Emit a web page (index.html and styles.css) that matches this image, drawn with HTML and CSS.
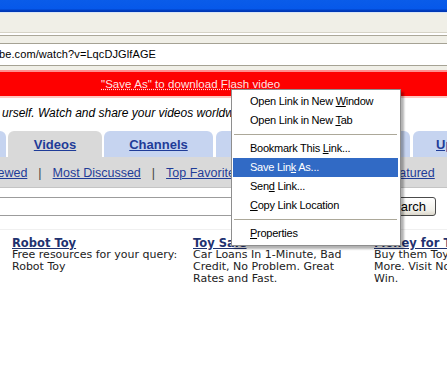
FILE: index.html
```html
<!DOCTYPE html>
<html lang="en">
<head>
    <meta charset="UTF-8">
    <title>YouTube - Broadcast Yourself.</title>
    <link rel="stylesheet" href="styles.css">
</head>
<body>
    <div class="titlebar"></div>
    <div class="toolbar"></div>
    <div class="addressbar">
        <div class="address-field">be.com/watch?v=LqcDJGlfAGE</div>
    </div>

    <div class="page">
        <div class="flash-bar">
            <a href="#" class="flash-link">"Save As" to download Flash video</a>
        </div>

        <p class="tagline">urself. Watch and share your videos worldwide!</p>

        <div class="tabs">
            <a href="#" class="tab tab-home">Home</a>
            <a href="#" class="tab tab-videos active">Videos</a>
            <a href="#" class="tab tab-channels">Channels</a>
            <a href="#" class="tab tab-community">Community</a>
            <a href="#" class="tab tab-upload">Upload</a>
        </div>

        <div class="subnav">
            <a href="#">Most Viewed</a><span class="sep">|</span>
            <a href="#">Most Discussed</a><span class="sep">|</span>
            <a href="#">Top Favorites</a><span class="sep">|</span>
            <a href="#">Most Subscribed</a><span class="sep">|</span>
            <a href="#">Featured</a>
        </div>

        <div class="search-row">
            <input type="text" class="search-input">
            <button class="search-btn">Search</button>
        </div>

        <div class="ads">
            <div class="ad">
                <a href="#" class="ad-title">Robot Toy</a>
                <p class="ad-text">Free resources for your query: Robot Toy</p>
            </div>
            <div class="ad">
                <a href="#" class="ad-title">Toy Sale</a>
                <p class="ad-text">Car Loans In 1-Minute, Bad Credit, No Problem. Great Rates and Fast.</p>
            </div>
            <div class="ad">
                <a href="#" class="ad-title">Money for Toys</a>
                <p class="ad-text">Buy them Toys, Games and More. Visit Now and Enter to Win.</p>
            </div>
        </div>
    </div>

    <!-- right-click menu over the page -->
    <ul class="context-menu">
        <li>Open Link in New <u>W</u>indow</li>
        <li>Open Link in New <u>T</u>ab</li>
        <li class="separator"></li>
        <li>Bookmark This <u>L</u>ink...</li>
        <li class="selected">Save Lin<u>k</u> As...</li>
        <li>Sen<u>d</u> Link...</li>
        <li><u>C</u>opy Link Location</li>
        <li class="separator"></li>
        <li><u>P</u>roperties</li>
    </ul>
</body>
</html>
```

FILE: styles.css
```css
:root {
    --chrome-bg: #f0efe7;
    --chrome-line: #aca899;
    --tab-blue: #c6d4f0;
    --tab-grey: #d9d9d9;
    --link-blue: #1f3c98;
    --ad-navy: #1f3270;
    --menu-select: #316ac5;
}

* {
    box-sizing: border-box;
    margin: 0;
    padding: 0;
}

body {
    width: 447px;
    height: 367px;
    overflow: hidden;
    background: #fff;
    font-family: 'Liberation Sans', Arial, sans-serif;
    position: relative;
}

a {
    color: var(--link-blue);
}

/* browser chrome */
.titlebar {
    height: 13px;
    background: linear-gradient(#0a5ce9 0, #0658ea 9px, #003fc4 10px, #0036b0 12px, #d8e4f6 12px);
}

.toolbar {
    height: 23px;
    background: var(--chrome-bg);
    border-bottom: 1px solid var(--chrome-line);
    box-shadow: inset 0 -2px 0 #fff, inset 0 -3px 0 #d6d3c6;
}

.addressbar {
    background: var(--chrome-bg);
    padding: 7px 0 4px;
}

.address-field {
    height: 23px;
    background: #fff;
    border-top: 1px solid #a5a294;
    border-bottom: 1px solid #a5a294;
    font-size: 11px;
    line-height: 21px;
    letter-spacing: 0.1px;
    text-indent: -1px;
    white-space: nowrap;
}

/* page */
.flash-bar {
    background: #fe0000;
    border-top: 2px solid #ff8e8e;
    border-bottom: 2px solid #ffc6c0;
    height: 28px;
    line-height: 24px;
    padding-left: 101px;
    font-size: 11.5px;
    letter-spacing: 0.05px;
    white-space: nowrap;
}

.flash-link {
    color: #ffe2e2;
    text-decoration: underline dotted;
}

.tagline {
    margin-top: 7px;
    font-size: 12px;
    font-style: italic;
    line-height: 16px;
    padding-left: 2px;
    white-space: nowrap;
}

.tabs {
    display: flex;
    margin-top: 10px;
    height: 26px;
    gap: 2px;
    margin-left: -52px;
    white-space: nowrap;
}

.tab {
    flex-shrink: 0;
    display: flex;
    align-items: center;
    justify-content: center;
    background: var(--tab-blue);
    border-radius: 6px 6px 0 0;
    font-size: 13px;
    font-weight: bold;
    padding-top: 1px;
}

.tab-home { width: 58px; }
.tab-videos { width: 94px; }
.tab-channels { width: 109px; }
.tab-community { width: 194px; margin-left: 1px; }
.tab-upload { width: 70px; margin-left: 1px; justify-content: flex-start; padding-left: 23px; }

.tab.active {
    background: var(--tab-grey);
}

.subnav {
    background: var(--tab-grey);
    border-bottom: 1px solid #c4c4c4;
    height: 31px;
    display: flex;
    align-items: center;
    padding-top: 1px;
    margin-left: -44px;
    font-size: 12.5px;
    white-space: nowrap;
}

.subnav .sep {
    color: #444;
    margin: 0 11px;
}

.search-row {
    display: flex;
    align-items: center;
    height: 42px;
    padding-bottom: 4px;
    gap: 6px;
    border-bottom: 1px solid #f0f0f0;
}

.search-input {
    width: 370px;
    height: 19px;
    margin-left: -2px;
    border: 1px solid #9c9c9c;
    border-left: none;
    background: #fff;
}

.search-btn {
    width: 62px;
    height: 19px;
    font-family: 'Liberation Sans', Arial, sans-serif;
    font-size: 13px;
    text-align: right;
    padding-right: 9px;
    border: 1px solid #4a4a4a;
    border-radius: 3px;
    background: linear-gradient(#ffffff, #f1f0ea 70%, #dcd8cc);
    color: #000;
}

.ads {
    display: grid;
    grid-template-columns: 181px 181px 181px;
    padding: 7px 0 0 12px;
}

.ad {
    padding-right: 8px;
}

.ad-title {
    display: block;
    font-family: 'DejaVu Sans', Verdana, sans-serif;
    font-size: 11.5px;
    font-weight: bold;
    line-height: 12px;
    color: var(--ad-navy);
    white-space: nowrap;
}

.ad-text {
    font-family: 'DejaVu Sans', Verdana, sans-serif;
    font-size: 11px;
    line-height: 12px;
    color: #222;
    width: 172px;
}

/* context menu */
.context-menu {
    position: absolute;
    left: 231px;
    top: 89px;
    width: 170px;
    list-style: none;
    background: #fff;
    border: 1px solid #8e8e8e;
    padding: 2px 2px 2px 1px;
    box-shadow: 3px 3px 2px rgba(0, 0, 0, 0.3);
    font-family: 'Liberation Sans', Arial, sans-serif;
    font-size: 11px;
    letter-spacing: -0.25px;
}

.context-menu li {
    height: 19px;
    line-height: 19px;
    padding-left: 17px;
    white-space: nowrap;
}

.context-menu li.selected {
    background: var(--menu-select);
    color: #fff;
}

.context-menu li.separator {
    height: 1px;
    margin: 4px 1px;
    background: #aca899;
}
```
